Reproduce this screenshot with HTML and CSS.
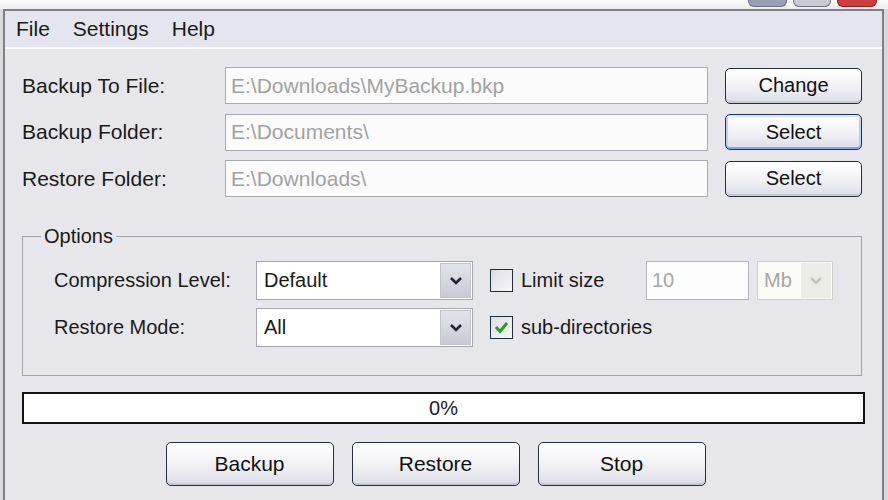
FILE: index.html
```html
<!DOCTYPE html>
<html>
<head>
<meta charset="utf-8">
<link rel="stylesheet" href="styles.css">
</head>
<body>
<div class="titlebar">
  <div class="caps"><span class="cap cap-min"></span><span class="cap cap-max"></span><span class="cap cap-close"></span></div>
</div>
<div class="window">
  <div class="menubar"><span class="menu-item">File</span><span class="menu-item">Settings</span><span class="menu-item">Help</span></div>
  <div class="client">
    <div class="paths">
      <span class="label">Backup To File:</span>
      <div class="field">E:\Downloads\MyBackup.bkp</div>
      <button class="btn">Change</button>
      <span class="label">Backup Folder:</span>
      <div class="field">E:\Documents\</div>
      <button class="btn btn-focus">Select</button>
      <span class="label">Restore Folder:</span>
      <div class="field">E:\Downloads\</div>
      <button class="btn">Select</button>
    </div>
    <fieldset class="options">
      <legend class="legend">Options</legend>
      <div class="opt-row">
        <span class="opt-label">Compression Level:</span>
        <div class="select"><span class="select-text">Default</span><span class="arrow"><svg width="14" height="10" viewBox="0 0 14 10"><path d="M2 2 L7 7 L12 2" fill="none" stroke="#1e2430" stroke-width="2.6"/></svg></span></div>
        <div class="check-group check-group-fixed"><span class="check"></span><span class="check-label">Limit size</span></div>
        <div class="small-field">10</div>
        <div class="select select-disabled"><span class="select-text">Mb</span><span class="arrow arrow-disabled"><svg width="14" height="10" viewBox="0 0 14 10"><path d="M2 2 L7 7 L12 2" fill="none" stroke="#c4c4c0" stroke-width="2.6"/></svg></span></div>
      </div>
      <div class="opt-row">
        <span class="opt-label">Restore Mode:</span>
        <div class="select"><span class="select-text">All</span><span class="arrow"><svg width="14" height="10" viewBox="0 0 14 10"><path d="M2 2 L7 7 L12 2" fill="none" stroke="#1e2430" stroke-width="2.6"/></svg></span></div>
        <div class="check-group"><span class="check"><svg width="21" height="21" viewBox="0 0 21 21"><path d="M5 10 L9 14.5 L16 6" fill="none" stroke="#2a9a2a" stroke-width="3"/></svg></span><span class="check-label">sub-directories</span></div>
      </div>
    </fieldset>
    <div class="progress">0%</div>
    <div class="actions">
      <button class="btn btn-big">Backup</button>
      <button class="btn btn-big">Restore</button>
      <button class="btn btn-big">Stop</button>
    </div>
  </div>
</div>
</body>
</html>
```
FILE: styles.css
```css
html, body {
  margin: 0;
  padding: 0;
  width: 888px;
  height: 500px;
  overflow: hidden;
  background: #d9d9de;
  font-family: "Liberation Sans", Arial, sans-serif;
  font-size: 20px;
  color: #1a1a1a;
}
.titlebar {
  height: 9px;
  background: linear-gradient(#fbfbfc, #eeeef2);
}
.caps {
  display: flex;
  justify-content: flex-end;
  gap: 6px;
  padding-right: 11px;
}
.cap {
  display: block;
  height: 6px;
  border-radius: 0 0 6px 6px;
  border: 1px solid #6f7280;
  border-top: none;
}
.cap-min { width: 37px; background: #9a9db6; }
.cap-max { width: 36px; background: #c9cad2; }
.cap-close { width: 38px; background: #cf3d3d; border-color: #8a2020; }
.window {
  margin: 0 4px 0 3px;
  border: 2px solid #7f8087;
  border-bottom: none;
  height: 489px;
  background: #e7e7eb;
}
.menubar {
  display: flex;
  gap: 23px;
  padding-left: 11px;
  height: 36px;
  align-items: center;
  background: #e4e5ee;
  border-bottom: 2px solid #fafafc;
  font-size: 21px;
}
.client {
  padding: 18px 20px 0 17px;
}
.paths {
  display: grid;
  grid-template-columns: 186px 483px 137px;
  grid-auto-rows: 37px;
  column-gap: 17px;
  row-gap: 9.5px;
  align-items: center;
}
.label {
  white-space: nowrap;
  font-size: 21px;
}
.field {
  height: 37px;
  box-sizing: border-box;
  border: 1px solid #a9abb2;
  background: #fbfbfb;
  color: #a2a2a2;
  padding-left: 5px;
  display: flex;
  align-items: center;
  white-space: nowrap;
  font-size: 21px;
}
.btn {
  font-family: inherit;
  font-size: 20px;
  color: #111;
  height: 36px;
  box-sizing: border-box;
  border: 1px solid #26303c;
  border-radius: 5px;
  background: linear-gradient(#ffffff 0%, #f4f4f8 45%, #dcdce6 100%);
  box-shadow: inset 0 -2px 0 #c9c9d6;
  padding: 0;
  cursor: default;
}
.btn-focus {
  border-color: #1e3658;
  box-shadow: inset 0 2px 0 #d3e4fb, inset 0 -2px 0 #80a8ea, inset 2px 0 0 #b6d0f6, inset -2px 0 0 #b6d0f6;
}
.options {
  margin: 27px 0 0 0;
  padding: 13px 0 28px 31px;
  border: 1px solid #a3a3ab;
  min-width: 0;
}
.legend {
  line-height: 24px;
  padding: 0 3px;
  margin-left: -13px;
}
.opt-row {
  display: flex;
  align-items: center;
  height: 39px;
}
.opt-row + .opt-row {
  margin-top: 8px;
}
.opt-label {
  width: 202px;
  white-space: nowrap;
}
.select {
  width: 217px;
  height: 39px;
  box-sizing: border-box;
  border: 1px solid #a5a8b0;
  background: #ffffff;
  display: flex;
  align-items: stretch;
}
.select-text {
  flex: 1;
  display: flex;
  align-items: center;
  padding-left: 7px;
}
.arrow {
  width: 31px;
  box-sizing: border-box;
  margin: 1px;
  border: 1px solid #c2c4cc;
  background: linear-gradient(#e2e3ea, #c9cad5);
  display: flex;
  align-items: center;
  justify-content: center;
}
.check-group {
  display: flex;
  align-items: center;
  margin-left: 17px;
}
.check-group-fixed {
  width: 156px;
}
.check {
  width: 23px;
  height: 23px;
  box-sizing: border-box;
  border: 1px solid #1f2d3d;
  background: linear-gradient(135deg, #dcdce2, #f8f8fa);
  display: flex;
  align-items: center;
  justify-content: center;
  flex: none;
}
.check-label {
  margin-left: 8px;
  white-space: nowrap;
}
.small-field {
  width: 103px;
  height: 39px;
  box-sizing: border-box;
  border: 1px solid #b3b5bc;
  background: #fdfdfd;
  color: #a8a8a8;
  padding-left: 5px;
  display: flex;
  align-items: center;
}
.select-disabled {
  width: 76px;
  margin-left: 8px;
  border-color: #cfd0cc;
  background: #fafaf6;
  color: #a6a6a6;
}
.select-disabled .select-text {
  padding-left: 6px;
}
.arrow-disabled {
  width: 30px;
  border: none;
  background: #ecece6;
}
.progress {
  margin: 16px -3px 0 0;
  height: 32px;
  box-sizing: border-box;
  border: 2px solid #111;
  background: #ffffff;
  display: flex;
  align-items: center;
  justify-content: center;
}
.actions {
  display: flex;
  justify-content: center;
  gap: 18px;
  margin-top: 18px;
  padding-right: 13px;
}
.btn-big {
  width: 168px;
  height: 44px;
  font-size: 21px;
}
```
